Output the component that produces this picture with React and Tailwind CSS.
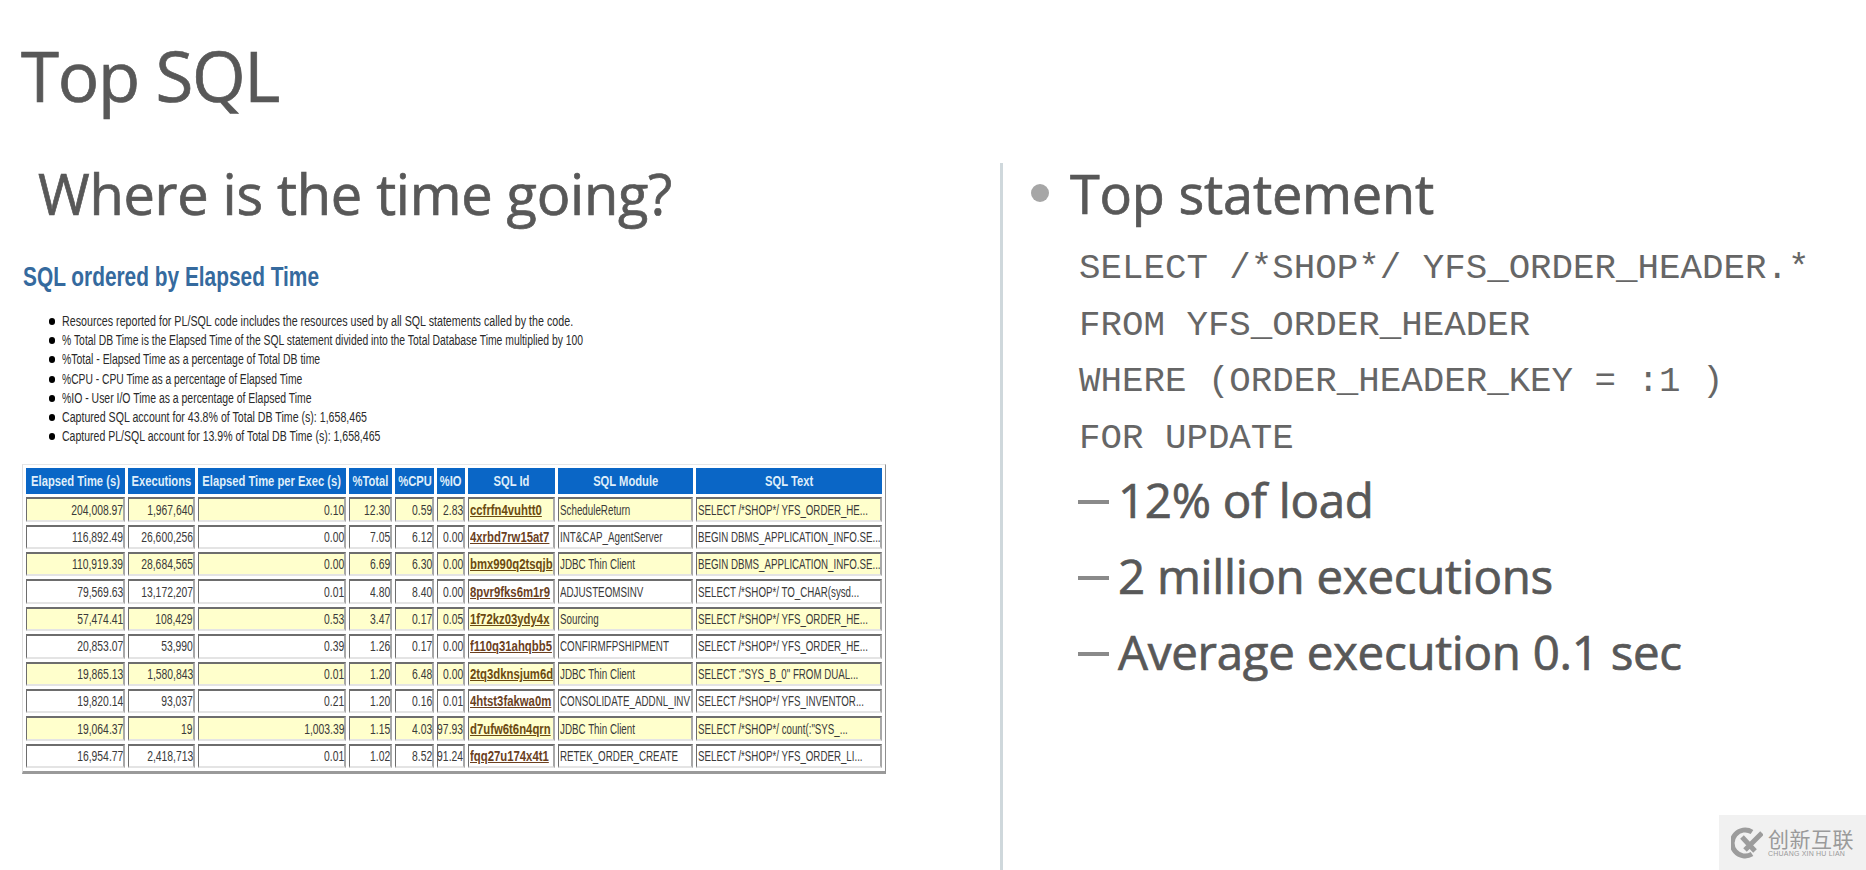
const sans = "font-['Open_Sans','Noto_Sans',sans-serif]";
const arial = "font-['Liberation_Sans',Arial,sans-serif]";
const heavy = "[-webkit-text-stroke:0.7px_#585858]";

const notes = [
  ["Resources reported for PL/SQL code includes the resources used by all SQL statements called by the code.", "scale-x-[0.764]"],
  ["% Total DB Time is the Elapsed Time of the SQL statement divided into the Total Database Time multiplied by 100", "scale-x-[0.741]"],
  ["%Total - Elapsed Time as a percentage of Total DB time", "scale-x-[0.746]"],
  ["%CPU - CPU Time as a percentage of Elapsed Time", "scale-x-[0.735]"],
  ["%IO - User I/O Time as a percentage of Elapsed Time", "scale-x-[0.746]"],
  ["Captured SQL account for 43.8% of Total DB Time (s): 1,658,465", "scale-x-[0.758]"],
  ["Captured PL/SQL account for 13.9% of Total DB Time (s): 1,658,465", "scale-x-[0.752]"],
];

const headers = ["Elapsed Time (s)", "Executions", "Elapsed Time per Exec (s)", "%Total", "%CPU", "%IO", "SQL Id", "SQL Module", "SQL Text"];
const widths = ["w-[99px]", "w-[67px]", "w-[148px]", "w-[43px]", "w-[39px]", "w-[28px]", "w-[87px]", "w-[135px]", "w-[186px]"];

const rows = [
  ["204,008.97", "1,967,640", "0.10", "12.30", "0.59", "2.83", "ccfrfn4vuhtt0", "ScheduleReturn", "SELECT /*SHOP*/ YFS_ORDER_HE..."],
  ["116,892.49", "26,600,256", "0.00", "7.05", "6.12", "0.00", "4xrbd7rw15at7", "INT&CAP_AgentServer", "BEGIN DBMS_APPLICATION_INFO.SE..."],
  ["110,919.39", "28,684,565", "0.00", "6.69", "6.30", "0.00", "bmx990q2tsqjb", "JDBC Thin Client", "BEGIN DBMS_APPLICATION_INFO.SE..."],
  ["79,569.63", "13,172,207", "0.01", "4.80", "8.40", "0.00", "8pvr9fks6m1r9", "ADJUSTEOMSINV", "SELECT /*SHOP*/ TO_CHAR(sysd..."],
  ["57,474.41", "108,429", "0.53", "3.47", "0.17", "0.05", "1f72kz03ydy4x", "Sourcing", "SELECT /*SHOP*/ YFS_ORDER_HE..."],
  ["20,853.07", "53,990", "0.39", "1.26", "0.17", "0.00", "f110q31ahqbb5", "CONFIRMFPSHIPMENT", "SELECT /*SHOP*/ YFS_ORDER_HE..."],
  ["19,865.13", "1,580,843", "0.01", "1.20", "6.48", "0.00", "2tq3dknsjum6d", "JDBC Thin Client", 'SELECT :"SYS_B_0" FROM DUAL...'],
  ["19,820.14", "93,037", "0.21", "1.20", "0.16", "0.01", "4htst3fakwa0m", "CONSOLIDATE_ADDNL_INV", "SELECT /*SHOP*/ YFS_INVENTOR..."],
  ["19,064.37", "19", "1,003.39", "1.15", "4.03", "97.93", "d7ufw6t6n4qrn", "JDBC Thin Client", 'SELECT /*SHOP*/ count(:"SYS_...'],
  ["16,954.77", "2,418,713", "0.01", "1.02", "8.52", "91.24", "fqq27u174x4t1", "RETEK_ORDER_CREATE", "SELECT /*SHOP*/ YFS_ORDER_LI..."],
];

function SqlTable() {
  return (
    <table className={`${arial} table-fixed border-separate border-spacing-[3px] w-[864px] ml-[22px] border border-t-[#e6e6e6] border-l-[#e0e0e0] border-r-[#8f8f8f] border-b-[3px] border-b-[#9a9a9a] text-[14px] leading-none`}>
      <thead>
        <tr>
          {headers.map((h, i) => (
            <th key={h} className={`${widths[i]} h-[26px] p-0 bg-[#0a66c6] text-[#dfeefa] font-bold whitespace-nowrap`}>
              <div className="flex justify-center">
                <span className="shrink-0 scale-x-[0.8] origin-center">{h}</span>
              </div>
            </th>
          ))}
        </tr>
      </thead>
      <tbody>
        {rows.map((r, ri) => (
          <tr key={r[6]}>
            {r.map((c, ci) => {
              const bg = ri % 2 === 0 ? "bg-[#ffffcc]" : "bg-white";
              const right = ci < 6;
              const scale = ci === 7 ? "scale-x-[0.7]" : ci === 8 ? "scale-x-[0.695]" : "scale-x-[0.74]";
              return (
                <td key={ci} className={`${bg} h-[24.4px] p-0 border-t-2 border-l border-r-2 border-b-2 border-t-[#6d6d6d] border-l-[#6d6d6d] border-r-[#a8a8a8] border-b-[#e4e4e4] whitespace-nowrap text-[#3a3a3a]`}>
                  <div className={`flex ${right ? "justify-end" : "justify-start pl-[1px]"}`}>
                    {ci === 6 ? (
                      <a className={`shrink-0 scale-x-[0.81] origin-left font-bold underline ${ri % 2 === 0 ? "text-[#6b4a10]" : "text-[#6b3f1e]"}`}>{c}</a>
                    ) : (
                      <span className={`shrink-0 ${scale} ${right ? "origin-right" : "origin-left"}`}>{c}</span>
                    )}
                  </div>
                </td>
              );
            })}
          </tr>
        ))}
      </tbody>
    </table>
  );
}

function Watermark() {
  return (
    <div className="absolute right-0 bottom-0 w-[147px] h-[55px] bg-[#f1f1f1] flex items-center pl-[12px] gap-[5px] text-[#9a9a9a]">
      <svg width="32" height="34" viewBox="0 0 32 34" fill="none">
        <path d="M21 6 A 13 13 0 1 0 21 28" stroke="#9c9c9c" strokeWidth="5" />
        <path d="M11 11 L24 25 M31 7 L14 24" stroke="#9c9c9c" strokeWidth="5" />
      </svg>
      <div className="flex flex-col items-start">
        <span className="font-['Noto_Sans_CJK_SC',sans-serif] text-[21px] leading-[23px] tracking-[0.5px]">创新互联</span>
        <span className={`${arial} text-[7px] leading-[8px] whitespace-nowrap tracking-[0.2px]`}>CHUANG XIN HU LIAN</span>
      </div>
    </div>
  );
}

export default function App() {
  return (
    <div className={`${sans} relative w-[1866px] h-[870px] overflow-hidden bg-white text-[#585858]`}>
      <h1 className={`${heavy} h-[163px] pl-[21px] pt-[29px] text-[69px] leading-[92px] tracking-[-1.3px]`}>Top SQL</h1>
      <div className="flex h-[707px]">
        <section className="w-[1003px] shrink-0 border-r-[3px] border-[#cfd8dc]">
          <h2 className={`${heavy} pl-[38px] h-[94px] text-[56px] leading-[60px] tracking-[-0.3px] whitespace-nowrap`}>Where is the time going?</h2>
          <h3 className={`${arial} pl-[23px] h-[55px] text-[#356a9e] font-bold text-[28px] leading-[40px]`}>
            <span className="inline-block scale-x-[0.745] origin-left whitespace-nowrap">SQL ordered by Elapsed Time</span>
          </h3>
          <ul className={`${arial} pl-[49px] text-[14px] leading-[19.2px] text-[#2a2a2a]`}>
            {notes.map(([n, s]) => (
              <li key={n} className="flex items-center h-[19.2px]">
                <span className="w-[6px] h-[7px] rounded-full bg-black mr-[7px] shrink-0" />
                <span className={`inline-block ${s} origin-left whitespace-nowrap`}>{n}</span>
              </li>
            ))}
          </ul>
          <div className="mt-[18px]">
            <SqlTable />
          </div>
        </section>
        <section className="flex-1 pl-[28px]">
          <div className="flex items-center h-[60px]">
            <span className="w-[18px] h-[18px] rounded-full bg-[#a6a6a6] shrink-0" />
            <span className={`${heavy} ml-[21px] text-[54px] leading-[60px] tracking-[-0.2px] whitespace-nowrap`}>Top statement</span>
          </div>
          <div className="font-['Liberation_Mono',monospace] pl-[48px] mt-[18px] text-[35.8px] leading-[56.5px] text-[#666] whitespace-nowrap">
            <div>SELECT /*SHOP*/ YFS_ORDER_HEADER.*</div>
            <div>FROM YFS_ORDER_HEADER</div>
            <div>WHERE (ORDER_HEADER_KEY = :1 )</div>
            <div>FOR UPDATE</div>
          </div>
          <ul className={`${heavy} pl-[47px] -mt-[5px] text-[47.5px] leading-[76px] tracking-[-0.3px]`}>
            {["12% of load", "2 million executions", "Average execution 0.1 sec"].map((t) => (
              <li key={t} className="flex items-center h-[76px] whitespace-nowrap">
                <span className="w-[31px] h-[4px] bg-[#8a8a8a] mr-[9px] mt-[4px] shrink-0" />
                {t}
              </li>
            ))}
          </ul>
        </section>
      </div>
      <Watermark />
    </div>
  );
}
